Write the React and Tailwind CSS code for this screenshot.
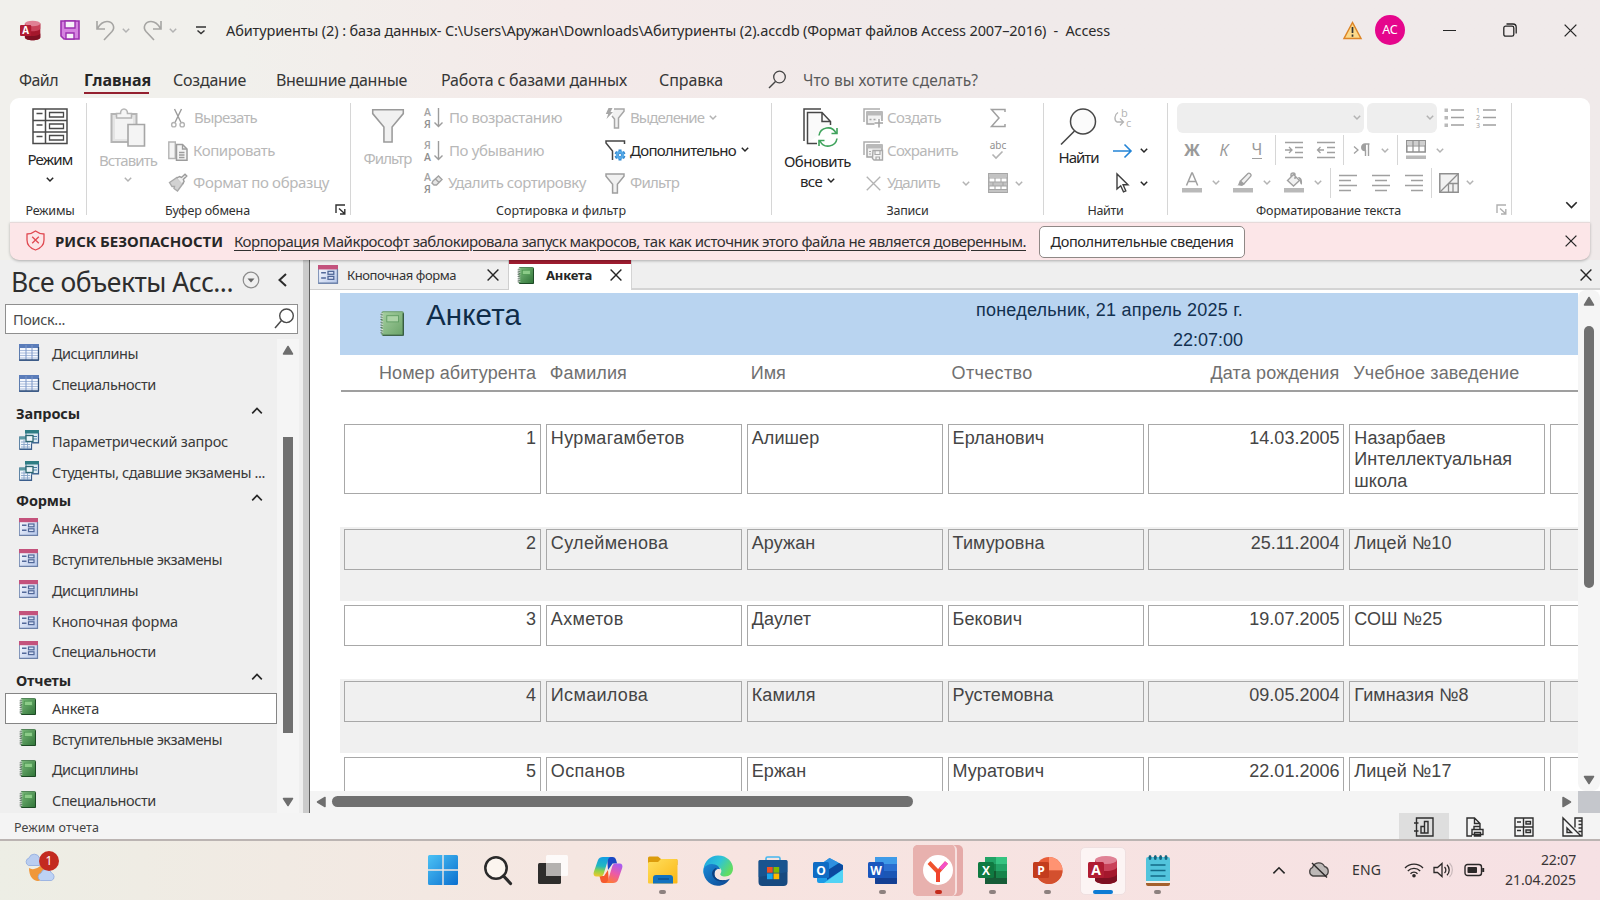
import { useLayoutEffect, useRef } from "react";

/* Text whose letter spacing is computed so that it fills the given width */
function Fit({ w, className = "", children }) {
  const ref = useRef(null);
  useLayoutEffect(() => {
    const el = ref.current;
    el.style.letterSpacing = "0px";
    const natural = el.getBoundingClientRect().width;
    el.style.letterSpacing = `${(w - natural) / el.textContent.length}px`;
  }, [w]);
  return (
    <span ref={ref} className={`inline-block shrink-0 whitespace-nowrap ${className}`}>
      {children}
    </span>
  );
}

function Svg({ w, h, vb, className = "", children }) {
  return (
    <svg width={w} height={h} viewBox={vb || `0 0 ${w} ${h}`} fill="none" className={`block shrink-0 overflow-visible ${className}`}>
      {children}
    </svg>
  );
}

const OFF = "#b3b3b3";
const OFFT = "text-[#b8b8b8]";

function Chev({ c = "#262626", w = 8, s = 1.5, className = "" }) {
  return (
    <Svg w={w} h={w * 0.625} vb="0 0 8 5" className={className}>
      <path d="M.8 .8 4 4 7.2 .8" stroke={c} strokeWidth={s} />
    </Svg>
  );
}

function Cross({ size = 12, c = "#262626", s = 1.4 }) {
  return (
    <Svg w={size} h={size} vb="0 0 12 12">
      <path d="M.6 .6 11.4 11.4M11.4 .6 .6 11.4" stroke={c} strokeWidth={s} />
    </Svg>
  );
}

/* ---------- small application tiles ---------- */
function AccessLogo({ size }) {
  return (
    <Svg w={size} h={size} vb="0 0 30 30">
      <path d="M7 5v20c0 2 5 4 11 4s11-2 11-4V5z" fill="#a4172c" />
      <path d="M7 19v6c0 2 5 4 11 4s11-2 11-4v-6c0 2-5 4-11 4S7 21 7 19z" fill="#7d1022" />
      <path d="M7 5v7c0 2 5 4 11 4s11-2 11-4V5z" fill="#c9425a" />
      <ellipse cx="18" cy="5" rx="11" ry="4" fill="#e08195" />
      <rect x="0" y="7" width="16" height="16" rx="1.5" fill="#b01c33" />
      <text x="8" y="20" textAnchor="middle" fontFamily="Open Sans, sans-serif" fontWeight="700" fontSize="14" fill="#fff">A</text>
    </Svg>
  );
}

function WordLogo() {
  return (
    <Svg w={30} h={30}>
      <rect x="7" y="2" width="22" height="27" rx="1" fill="#2a6fd0" />
      <rect x="7" y="2" width="22" height="7" fill="#3f9be8" />
      <rect x="7" y="16" width="22" height="7" fill="#1b56b5" />
      <path d="M7 23h22v5a1 1 0 0 1-1 1H8a1 1 0 0 1-1-1z" fill="#143f93" />
      <rect x="0" y="7" width="16" height="16" rx="1.5" fill="#1a56bd" />
      <text x="8" y="19.500" textAnchor="middle" fontFamily="Open Sans, sans-serif" fontWeight="700" fontSize="12" fill="#fff">W</text>
    </Svg>
  );
}

function ExcelLogo() {
  return (
    <Svg w={30} h={30}>
      <rect x="7" y="2" width="22" height="27" rx="1" fill="#17834a" />
      <rect x="7" y="2" width="11" height="7" fill="#22a366" />
      <rect x="18" y="2" width="11" height="7" fill="#35c481" />
      <rect x="18" y="9" width="11" height="7" fill="#22a366" />
      <rect x="7" y="16" width="11" height="7" fill="#12592f" />
      <rect x="7" y="23" width="22" height="6" fill="#175c37" />
      <rect x="0" y="7" width="16" height="16" rx="1.5" fill="#0f7a41" />
      <text x="8" y="19.500" textAnchor="middle" fontFamily="Open Sans, sans-serif" fontWeight="700" fontSize="12" fill="#fff">X</text>
    </Svg>
  );
}

function PptLogo() {
  return (
    <Svg w={30} h={30}>
      <circle cx="16" cy="15.500" r="13.500" fill="#e85c38" />
      <path d="M16 2a13.500 13.500 0 0 1 13.500 13.500H16z" fill="#ff9372" />
      <path d="M2.500 15.500h27A13.500 13.500 0 0 1 16 29 13.500 13.500 0 0 1 2.500 15.500z" fill="#d3502e" />
      <rect x="0" y="7" width="16" height="16" rx="1.5" fill="#c33c1d" />
      <text x="8" y="19.500" textAnchor="middle" fontFamily="Open Sans, sans-serif" fontWeight="700" fontSize="12" fill="#fff">P</text>
    </Svg>
  );
}

function OutlookLogo() {
  return (
    <Svg w={30} h={30}>
      <path d="M4 12 16.500 3 30 10v16a2 2 0 0 1-2 2H6a2 2 0 0 1-2-2z" fill="#1c9be6" />
      <path d="M4 12 16.500 3 25 7.500 14 16z" fill="#2f8fe0" />
      <path d="M14 15.500 26 8l4 2.500v4L14 25z" fill="#0b4aa0" />
      <path d="M30 14.500V26a2 2 0 0 1-2 2H11z" fill="#52d3f5" />
      <rect x="0" y="7" width="16" height="16" rx="1.500" fill="#0f6cc4" />
      <text x="8" y="19.500" textAnchor="middle" fontFamily="Open Sans, sans-serif" fontWeight="700" fontSize="12" fill="#fff">O</text>
    </Svg>
  );
}

function FolderLogo() {
  return (
    <Svg w={30} h={30}>
      <defs>
        <linearGradient id="fold" x1="0" y1="0" x2="1" y2="1">
          <stop offset="0" stopColor="#ffdf5e" />
          <stop offset="1" stopColor="#fbb714" />
        </linearGradient>
      </defs>
      <path d="M0 3a1.500 1.500 0 0 1 1.500-1.500H10L13 4h15a1.500 1.500 0 0 1 1.500 1.500V10H0z" fill="#dc9c0c" />
      <path d="M0 8a2 2 0 0 1 2-1h8l3-3h15.500a1 1 0 0 1 1 1v22.500a1 1 0 0 1-1 1H1a1 1 0 0 1-1-1z" fill="url(#fold)" />
      <path d="M5 28.500V23a3 3 0 0 1 3-3h14a3 3 0 0 1 3 3v5.500z" fill="#1272bf" />
      <path d="M10 24h11" stroke="#0b4a86" strokeWidth="1.200" />
    </Svg>
  );
}

function EdgeLogo() {
  return (
    <Svg w={30} h={31} vb="0 0 30 31">
      <defs>
        <linearGradient id="edgeTop" x1="0" y1="0" x2="1" y2=".5">
          <stop offset="0" stopColor="#1c9fe0" />
          <stop offset=".55" stopColor="#2ec3d8" />
          <stop offset="1" stopColor="#62dc62" />
        </linearGradient>
        <linearGradient id="edgeBot" x1="0" y1="0" x2="1" y2="1">
          <stop offset="0" stopColor="#1a8ad8" />
          <stop offset="1" stopColor="#0d4691" />
        </linearGradient>
      </defs>
      <path d="M.5 14C1.500 6 7.500.5 15 .5c9 0 15 6.500 15 13 0 5-3.500 8-8 8-3.500 0-5.500-1.500-4.500-3 2-3 .5-6-3.500-6.500C8 11 3 14.500.8 19 .3 17.500.2 16 .5 14z" fill="url(#edgeTop)" />
      <path d="M.7 13.500C3 9.500 8 8 12 9.500c3.500 1.300 5 3.500 5.300 5.300-1.300-1.600-5.800-.3-5.800 4.200 0 5 6 8 15.500 4.500C24 28.500 19.500 31 14.500 30.800 5 30-.8 22 .7 13.500z" fill="url(#edgeBot)" />
      <path d="M11.500 19c0-2.500 1.500-4.500 3.500-5 1.500 0 2.300.3 2.500 1-.2 1.300-1.500 2.500-1 4 .7 2.500 3.500 3.500 6 3.500 1.800 0 3.200-.3 4.500-.8l.2 1.800c-3 1.800-6 2.300-9 1.500-4-1-6.700-3.500-6.700-6z" fill="#f4e3e0" />
      <path d="M11.500 19c0 5 6 9 15.500 4.500C20 28.500 9.500 27 9 18c.5-3 2.500-5 5-5-1.500 1-2.500 3-2.500 6z" fill="#0b3f80" />
    </Svg>
  );
}

function StoreLogo() {
  return (
    <Svg w={30} h={31}>
      <path d="M8 7V3.500A1.500 1.500 0 0 1 9.500 2h11A1.500 1.500 0 0 1 22 3.500V7" stroke="#46b7ee" strokeWidth="1.600" />
      <path d="M.5 6.500a1.500 1.500 0 0 1 1.500-1.500h26a1.500 1.500 0 0 1 1.500 1.500V27a4 4 0 0 1-4 4h-21a4 4 0 0 1-4-4z" fill="#174a80" />
      <path d="M.5 6.500a1.500 1.500 0 0 1 1.500-1.500h26a1.500 1.500 0 0 1 1.500 1.500V17L.5 22z" fill="#1a5c9a" opacity=".6" />
      <rect x="9" y="12" width="5.700" height="5.700" fill="#f25022" />
      <rect x="15.500" y="12" width="5.700" height="5.700" fill="#7fba00" />
      <rect x="9" y="18.500" width="5.700" height="5.700" fill="#19a7ee" />
      <rect x="15.500" y="18.500" width="5.700" height="5.700" fill="#ffb900" />
    </Svg>
  );
}

function CopilotLogo() {
  return (
    <Svg w={30} h={28}>
      <defs>
        <linearGradient id="cpA" x1=".3" y1="0" x2=".2" y2="1">
          <stop offset="0" stopColor="#149fe2" />
          <stop offset=".45" stopColor="#22b8c0" />
          <stop offset=".7" stopColor="#8fd14a" />
          <stop offset="1" stopColor="#f3c72c" />
        </linearGradient>
        <linearGradient id="cpB" x1=".7" y1="0" x2=".3" y2="1">
          <stop offset="0" stopColor="#a95cf0" />
          <stop offset=".5" stopColor="#ec5aa6" />
          <stop offset="1" stopColor="#ff7a35" />
        </linearGradient>
      </defs>
      <path d="M14 1h5.500c2 0 3 1 3.600 3l1 3.500h-4.500L15 14z" fill="#1a48c4" />
      <path d="M16 27h-5.500c-2 0-2.500-1-3-3L6.500 20H11l4-6z" fill="#f5592e" />
      <path d="M10 1h8c-1.700 0-2.600 1.500-3.200 3.500l-4 13c-.6 2-1.600 3-3.300 3H3.500C1 20.500 0 18.500.8 16L5 4C5.800 2 7.500 1 10 1z" fill="url(#cpA)" />
      <path d="M20 27h-8c1.700 0 2.600-1.500 3.200-3.500l4-13c.6-2 1.600-3 3.300-3h4c2.500 0 3.500 2 2.700 4.500L25 24c-.8 2-2.500 3-5 3z" fill="url(#cpB)" />
    </Svg>
  );
}

function NotepadLogo() {
  return (
    <Svg w={24} h={31}>
      <path d="M0 4a2 2 0 0 1 2-2h20a2 2 0 0 1 2 2v22H0z" fill="#52c4dc" />
      <path d="M0 26h24v2H0z" fill="#f3efe9" />
      <path d="M0 28h24v1a2 2 0 0 1-2 2H2a2 2 0 0 1-2-2z" fill="#a5602c" />
      <g fill="#15647e">
        <ellipse cx="4" cy="2.600" rx="1.500" ry="2.500" />
        <ellipse cx="9.300" cy="2.600" rx="1.500" ry="2.500" />
        <ellipse cx="14.600" cy="2.600" rx="1.500" ry="2.500" />
        <ellipse cx="20" cy="2.600" rx="1.500" ry="2.500" />
      </g>
      <path d="M4.500 10h15M4.500 15.500h15M4.500 21h15" stroke="#136a86" strokeWidth="1.500" />
    </Svg>
  );
}

/* ---------- ribbon icons ---------- */
const ViewIcon = () => (
  <Svg w={36} h={37}>
    <g stroke="#4a4a4a" strokeWidth="1.500">
      <path d="M1 1h34v34.500H1zM1 12.500h34M1 24h34M13.500 1v34.500" />
      <path d="M17.500 4.500h14v4.500h-14zM17.500 16h14v4.500h-14zM17.500 27.500h14V32h-14zM4.500 5.500h6M4.500 17h6M4.500 28.500h6" strokeWidth="1.300" />
    </g>
  </Svg>
);
const PasteIcon = () => (
  <Svg w={36} h={40}>
    <path d="M1.500 6h25v28h-25z" fill="#e4e4e4" stroke="#b5b5b5" strokeWidth="2" />
    <path d="M5 9h18v22H5z" fill="#f3f3f3" />
    <path d="M6.500 10V5.500h4c0-2.500 1.500-4.500 3.500-4.500s3.500 2 3.500 4.500h4V10z" fill="#f6f6f6" stroke="#b5b5b5" strokeWidth="1.600" />
    <path d="M18 16.500h16.500v21.500H18z" fill="#f4f4f4" stroke="#a6a6a6" strokeWidth="1.600" />
  </Svg>
);
const CutIcon = () => (
  <Svg w={20} h={20}>
    <g stroke={OFF} strokeWidth="1.400">
      <path d="M6.500 1 13 14.500M13.500 1 7 14.500" stroke="#9c9c9c" />
      <circle cx="5.800" cy="16.700" r="2.200" />
      <circle cx="14.200" cy="16.700" r="2.200" />
    </g>
  </Svg>
);
const CopyIcon = () => (
  <Svg w={20} h={20}>
    <path d="M.8 1h6.500v16.500H.8z" fill="#f4f4f4" stroke={OFF} strokeWidth="1.400" />
    <path d="M8.500 3.500h6l4.500 4.500v11.200H8.500z" fill="#f4f4f4" stroke="#9c9c9c" strokeWidth="1.500" />
    <path d="M14.500 3.500V8H19M11 11.500h5.500M11 14h5.500M11 16.500h5.500" stroke="#9c9c9c" strokeWidth="1.300" />
  </Svg>
);
const BrushIcon = () => (
  <Svg w={20} h={20}>
    <path d="M1.500 9.500 9 4.500l6 6L9.500 18 6 15.500l.5-2L4 13.500z" fill="#d2d2d2" stroke="#a9a9a9" strokeWidth="1.400" />
    <path d="m9 5 2.500-1.500 2 1L17 1.200l1.800 1.800-3.500 3.500.8 2L14.500 11" fill="#efefef" stroke="#9c9c9c" strokeWidth="1.400" />
  </Svg>
);
const Funnel = ({ w = 20, c = "#9f9f9f", fill = "#f1f1f1", s = 1.5 }) => (
  <Svg w={w} h={w * 1.05} vb="0 0 20 21">
    <path d="M1 1h18v2.300l-6.600 7.900V20H7.600v-8.800L1 3.300z" fill={fill} stroke={c} strokeWidth={s} />
  </Svg>
);
function SortIcon({ a, b, erase }) {
  return (
    <Svg w={21} h={22}>
      <g fontFamily="Open Sans, sans-serif" fontWeight="600" fontSize="10.500" textAnchor="middle">
        <text x="4.500" y="9" fill="#a3a3a3">{a}</text>
        <text x="4.500" y="20.500" fill="#8e8e8e">{b}</text>
      </g>
      {erase ? (
        <path d="m10 9 5.500-5 3.500 3.500-5.500 5.500h-2.500L9 11zM12.500 7l3.500 3.500" stroke="#a3a3a3" strokeWidth="1.400" fill="#e6e6e6" />
      ) : (
        <path d="M15.500 1v18.500M11.500 15.500l4 4 4-4" stroke="#9c9c9c" strokeWidth="1.400" />
      )}
    </Svg>
  );
}
const SelFilterIcon = () => (
  <Svg w={20} h={21}>
    <path d="M9 1h10v2.300l-5.500 6.700V20h-4v-9L7 8" fill="#f1f1f1" stroke="#a6a6a6" strokeWidth="1.500" />
    <path d="M3.500 0h4L5.500 4H8l-6.500 7 1.700-5H.8z" fill="#a6a6a6" />
  </Svg>
);
const AdvFilterIcon = () => (
  <Svg w={21} h={21}>
    <path d="M19.500 4V1H1v2l6.500 8v9" stroke="#454545" strokeWidth="1.500" />
    <g stroke="#2f86cf" strokeWidth="3">
      <path d="M15 9.500v11M10.300 12.200l9.400 5.600M19.700 12.200l-9.400 5.600" />
    </g>
    <circle cx="15" cy="15" r="4.200" fill="#55a9e6" />
    <circle cx="15" cy="15" r="1.600" fill="#fff" stroke="#2f86cf" strokeWidth=".8" />
  </Svg>
);
const RefreshIcon = () => (
  <Svg w={36} h={39}>
    <path d="M1 33V1h17" stroke="#474747" strokeWidth="1.500" />
    <path d="M4.500 35V4.500H19l8.500 9v5" fill="#fafafa" />
    <path d="M14 35.500H4.500v-31H19l8.500 9V17M19 4.500v9h8.500" stroke="#474747" strokeWidth="1.500" />
    <circle cx="25" cy="29" r="10" fill="#fff" />
    <g stroke="#3fa35c" strokeWidth="1.600">
      <path d="M16 27.500a9 9 0 0 1 17-2.500M34 20v5.500h-5.500M34 30.500a9 9 0 0 1-17 2.500M16 38v-5.500h5.500" />
    </g>
  </Svg>
);
const NewIcon = ({ save }) => (
  <Svg w={21} h={20}>
    <path d="M1 14V1h16" stroke="#adadad" strokeWidth="1.500" />
    <path d="M4 4h15v12H4z" fill="#f1f1f1" stroke="#a3a3a3" strokeWidth="1.500" />
    <path d="M4 4h15v3.500H4z" fill="#b9b9b9" />
    {save ? (
      <g>
        <path d="M10 9.500h9.500V19H11l-1.500-1.500z" fill="#f6f6f6" stroke="#a9a9a9" strokeWidth="1.400" />
        <path d="M12 10v3.500h5V10M13 19v-3h3.500v3" stroke="#a9a9a9" strokeWidth="1.200" />
        <path d="M6 10.500h2M6 13h2" stroke="#a9a9a9" />
      </g>
    ) : (
      <g>
        <path d="M11.500 15h9M16 11v9" stroke="#fff" strokeWidth="4" />
        <path d="M6.500 11.500h2M10.500 11.500h2M11.500 15h8.500M16 11v8.500" stroke="#a3a3a3" strokeWidth="1.500" />
      </g>
    )}
  </Svg>
);
const SigmaIcon = () => (
  <Svg w={16} h={20}>
    <path d="M15 4V1.500H1.500L9 10l-7.500 8.500H15V16" stroke="#a0a0a0" strokeWidth="1.500" />
  </Svg>
);
const SpellIcon = () => (
  <Svg w={20} h={22}>
    <text x="10" y="8.500" textAnchor="middle" fontFamily="Noto Sans, sans-serif" fontSize="10" fill="#8f8f8f">abc</text>
    <path d="m4.500 14.500 3.500 3.500 6.500-6.500" stroke={OFF} strokeWidth="1.600" />
  </Svg>
);
const MoreIcon = () => (
  <Svg w={20} h={20}>
    <path d="M.8.8h18.400v18.400H.8z" fill="#fff" stroke="#a6a6a6" strokeWidth="1.500" />
    <path d="M1 1h18v3.500H1zM1 9h18v4H1zM1 16.500h18V19H1z" fill="#c3c3c3" />
    <path d="M.8 5h18.400M.8 9h18.400M.8 13h18.400M.8 16.500h18.400M7 5v4M13 5v4M5 9v4M15 9v4M7 13v4M13 13v4" stroke="#a6a6a6" strokeWidth="1.100" />
  </Svg>
);
const FindIcon = () => (
  <Svg w={37} h={38}>
    <circle cx="23" cy="13.500" r="12.500" stroke="#474747" strokeWidth="1.500" fill="#fbfbfb" />
    <path d="M14.500 23 1 36.500" stroke="#474747" strokeWidth="1.600" />
  </Svg>
);
const ReplaceIcon = () => (
  <Svg w={20} h={22}>
    <g fontFamily="Open Sans, sans-serif" fontSize="11" fill={OFF}>
      <text x="8" y="10">b</text>
      <text x="13" y="20">c</text>
    </g>
    <path d="M5 5.500C1.500 7.500.8 13 4 15h6M7 11.500l3.500 3.500L7 18.500" stroke={OFF} strokeWidth="1.300" />
  </Svg>
);
const GotoIcon = () => (
  <Svg w={20} h={16}>
    <path d="M0 8h18M11.500 1.500 18 8l-6.500 6.500" stroke="#2384d6" strokeWidth="1.600" />
  </Svg>
);
const CursorIcon = () => (
  <Svg w={16} h={20}>
    <path d="M2 1v15l3.700-3.200 2.800 6 2.300-1-2.700-6H13z" fill="#fdfdfd" stroke="#3d3d3d" strokeWidth="1.400" />
  </Svg>
);

const G = "#a0a0a0";
function ListIcon({ numbered }) {
  return (
    <Svg w={20} h={21}>
      <path d="M7 3h13M7 10.500h13M7 18h13" stroke={G} strokeWidth="1.400" />
      {numbered ? (
        <g fontFamily="Noto Sans, sans-serif" fontSize="7" fill={G}>
          <text x="0" y="5.500">1</text>
          <text x="0" y="13">2</text>
          <text x="0" y="20.500">3</text>
        </g>
      ) : (
        <path d="M.5 1.500h3.500V5H.5zM.5 9h3.500v3.500H.5zM.5 16.500h3.500V20H.5z" fill="#b9b9b9" />
      )}
    </Svg>
  );
}
function IndentIcon({ out }) {
  return (
    <Svg w={20} h={18}>
      <path d="M1 1.500h18M11 6.500h8M11 11.500h8M1 16.500h18" stroke={G} strokeWidth="1.400" />
      {out ? <path d="M1.500 9H8M4.500 6 1.500 9l3 3" stroke={G} strokeWidth="1.300" /> : <path d="M1 9h7M5 6l3 3-3 3" stroke={G} strokeWidth="1.300" />}
    </Svg>
  );
}
function AlignIcon({ d }) {
  return (
    <Svg w={18} h={18}>
      <path d={d} stroke={G} strokeWidth="1.400" />
    </Svg>
  );
}
const ParaIcon = () => (
  <Svg w={18} h={14}>
    <path d="m0 3.500 4 3.500-4 3.500" stroke={G} strokeWidth="1.300" />
    <path d="M15.500 1H11a3.200 3.200 0 0 0 0 6.500h.5V13M14.500 1v12" stroke={G} strokeWidth="1.400" />
    <path d="M12 1h-1a3.200 3.200 0 0 0 0 6.500h1z" fill={G} />
  </Svg>
);
const GridColorIcon = () => (
  <Svg w={20} h={20}>
    <path d="M.8.8h18.400V12H.8z" fill="#fff" stroke="#8f8f8f" strokeWidth="1.500" />
    <path d="M1 1h18v4.500H1z" fill="#cfcfcf" />
    <path d="M1 6h18M7 1v11M13 1v11" stroke="#8f8f8f" strokeWidth="1.200" />
    <path d="M0 15.500h20V19H0z" fill="#b9b9b9" />
  </Svg>
);
const FontColorIcon = () => (
  <Svg w={20} h={21}>
    <path d="M4.500 13.500 9.800 1h.6l5.300 12.500M6.500 9.500h7.200" stroke={G} strokeWidth="1.500" />
    <path d="M0 16h20v4.500H0z" fill="#b9b9b9" />
  </Svg>
);
const PenIcon = () => (
  <Svg w={20} h={21}>
    <path d="M8 8.500 15 1.500c1.200-1.200 4 1.200 2.800 2.600l-6.500 7.400-2 .8-1.800-1.800z" stroke={G} strokeWidth="1.400" fill="#f1f1f1" />
    <path d="m7 8-2 5H3.500l5.500 1 3-2z" fill={G} />
    <path d="M0 16h20v4.500H0z" fill="#b9b9b9" />
  </Svg>
);
const FillIcon = () => (
  <Svg w={20} h={21}>
    <path d="m3.500 8.500 6-6 6 6-6 5.500zM7 5V2.500c0-2 4-2 4 0V7" stroke={G} strokeWidth="1.400" fill="#f1f1f1" />
    <path d="M14 5c3 0 4.500 2 4 7.500-2 0-2-2-2-4z" fill={G} />
    <path d="M0 16h20v4.500H0z" fill="#b9b9b9" />
  </Svg>
);
const AltIcon = () => (
  <Svg w={20} h={20}>
    <path d="M.8.8h18.400v18.400H.8z" fill="#f1f1f1" stroke="#8f8f8f" strokeWidth="1.500" />
    <path d="M1 19 19 1M9.500 10.500H19M9.500 10.500V19M14 10.500V19" stroke="#8f8f8f" strokeWidth="1.300" />
  </Svg>
);
const Launcher = ({ c }) => (
  <Svg w={11} h={11}>
    <path d="M1 9V1h9M4 4.500l5.500 5M9.800 5v5H5" stroke={c} strokeWidth="1.400" />
  </Svg>
);

/* ---------- ribbon structure ---------- */
const Group = ({ className, label, labelW, labelPad = "", launcher, children }) => (
  <div className={`relative flex h-[112px] shrink-0 flex-col border-r border-[#d6d6d6] ${className}`}>
    <div className="flex h-[98.500px] w-full shrink-0">{children}</div>
    <div className={`flex h-[18px] shrink-0 items-center justify-center ${labelPad}`}>
      <Fit w={labelW} className="text-[12.5px] leading-[18px] text-[#303030]">{label}</Fit>
    </div>
    {launcher && <div className="absolute right-[4px] bottom-0">{launcher}</div>}
  </div>
);

const Col = ({ className = "", children }) => <div className={`-mt-px flex shrink-0 flex-col ${className}`}>{children}</div>;

const Item = ({ icon, text, w, on, children, gap = "gap-[6px]" }) => (
  <div className={`flex h-[32.5px] items-center ${gap}`}>
    <div className="flex w-[20px] shrink-0 justify-center">{icon}</div>
    {text && <Fit w={w} className={`mb-[2px] text-[15px] leading-5 ${on ? "text-[#262626]" : OFFT}`}>{text}</Fit>}
    {children}
  </div>
);

const Cell = ({ className, children }) => <div className={`flex shrink-0 items-center ${className}`}>{children}</div>;
const Rule = ({ className }) => <div className={`h-[30px] w-px shrink-0 bg-[#d6d6d6] ${className}`} />;

function Ribbon() {
  return (
    <div className="flex h-[124px] rounded-t-[9px] bg-white pt-[5px]">
      <Group className="w-[77px]" label="Режимы" labelW={49} labelPad="pl-[4px]">
        <div className="flex w-full flex-col items-center pt-[5px] pl-[4px]">
          <ViewIcon />
          <Fit w={45} className="mt-[4px] text-[15px] leading-5 text-[#262626]">Режим</Fit>
          <Chev className="mt-[8px]" />
        </div>
      </Group>

      <Group className="w-[264px]" label="Буфер обмена" labelW={85} labelPad="pr-[22px]" launcher={<Launcher c="#303030" />}>
        <div className="flex w-[82px] shrink-0 flex-col items-center pt-[5px]">
          <PasteIcon />
          <Fit w={58} className={`mt-[2px] text-[15px] leading-5 ${OFFT}`}>Вставить</Fit>
          <Chev className="mt-[7px]" c={OFF} />
        </div>
        <Col className="-ml-px">
          <Item icon={<CutIcon />} text="Вырезать" w={63} gap="gap-[6px]" />
          <Item icon={<CopyIcon />} text="Копировать" w={82} gap="gap-[5px]" />
          <Item icon={<BrushIcon />} text="Формат по образцу" w={136} gap="gap-[5px]" />
        </Col>
      </Group>

      <Group className="w-[421px]" label="Сортировка и фильтр" labelW={130} launcher={null}>
        <div className="flex w-[72px] flex-col items-center pt-[5px] pl-px">
          <Funnel w={34} s={0.9} c="#9a9a9a" />
          <Fit w={48} className={`mt-[4px] text-[15px] leading-5 ${OFFT}`}>Фильтр</Fit>
        </div>
        <Col className="w-[182px]">
          <Item icon={<SortIcon a="А" b="Я" />} text="По возрастанию" w={113} gap="gap-[6px]" />
          <Item icon={<SortIcon a="Я" b="А" />} text="По убыванию" w={95} gap="gap-[6px]" />
          <Item icon={<SortIcon a="А" b="Я" erase />} text="Удалить сортировку" w={138} gap="gap-[5px]" />
        </Col>
        <Col>
          <Item icon={<SelFilterIcon />} text="Выделение" w={74} gap="gap-[5px]"><Chev c={OFF} className="mb-[2px]" /></Item>
          <Item icon={<AdvFilterIcon />} text="Дополнительно" w={106} on gap="gap-[5px]"><Chev className="mb-[2px]" /></Item>
          <Item icon={<Funnel />} text="Фильтр" w={49} gap="gap-[5px]" />
        </Col>
      </Group>

      <Group className="w-[272px]" label="Записи" labelW={42}>
        <div className="flex w-[91px] flex-col items-center pt-[5px]">
          <div className="ml-[6px]"><RefreshIcon /></div>
          <Fit w={67} className="mt-[4px] text-[15px] leading-5 text-[#262626]">Обновить</Fit>
          <div className="flex items-center gap-[5px]">
            <Fit w={22} className="text-[15px] leading-5 text-[#262626]">все</Fit>
            <Chev className="mb-[2px]" />
          </div>
        </div>
        <Col className="w-[125px]">
          <Item icon={<NewIcon />} text="Создать" w={54} gap="gap-[4px]" />
          <Item icon={<NewIcon save />} text="Сохранить" w={71} gap="gap-[4px]" />
          <Item icon={<Cross size={15} c={OFF} s={1.1} />} text="Удалить" w={53} gap="gap-[4px]">
            <Chev c={OFF} className="ml-[18px]" />
          </Item>
        </Col>
        <Col>
          <Item icon={<SigmaIcon />} />
          <Item icon={<SpellIcon />} />
          <Item icon={<MoreIcon />}><Chev c={OFF} className="ml-px" /></Item>
        </Col>
      </Group>

      <Group className="w-[124px]" label="Найти" labelW={36}>
        <div className="flex w-[69px] flex-col items-center pt-[5px]">
          <FindIcon />
          <Fit w={40} className="mt-px text-[15px] leading-5 text-[#262626]">Найти</Fit>
        </div>
        <Col>
          <Item icon={<ReplaceIcon />} />
          <Item icon={<GotoIcon />}><Chev className="ml-px" /></Item>
          <Item icon={<CursorIcon />}><Chev className="ml-px" /></Item>
        </Col>
      </Group>

      <Group className="w-[344px]" label="Форматирование текста" labelW={145} labelPad="pr-[22px]" launcher={<Launcher c="#b0b0b0" />}>
        <Col className="pl-[9px]">
          <div className="flex h-[31px] items-center">
            <div className="flex h-[30px] w-[187px] items-center justify-end rounded-[6px] bg-[#eeeeee] pr-[3px]"><Chev c={OFF} /></div>
            <div className="ml-[3px] flex h-[30px] w-[70px] items-center justify-end rounded-[6px] bg-[#eeeeee] pr-[3px]"><Chev c={OFF} /></div>
            <div className="ml-[7px]"><ListIcon /></div>
            <div className="ml-[12px]"><ListIcon numbered /></div>
          </div>
          <div className="flex h-[34px] items-center text-[16px] leading-none text-[#9a9a9a]">
            <Cell className="w-[30px] justify-center font-bold">Ж</Cell>
            <Cell className="w-[34px] justify-center italic">К</Cell>
            <Cell className="w-[32px] justify-center"><span className="border-b border-[#a0a0a0] pb-px">Ч</span></Cell>
            <Rule className="ml-[2px]" />
            <Cell className="ml-[8px] w-[32px]"><IndentIcon /></Cell>
            <Cell className="w-[27px]"><IndentIcon out /></Cell>
            <Rule />
            <Cell className="ml-[10px] w-[27px]"><ParaIcon /></Cell>
            <Cell className="w-[16px]"><Chev c={OFF} /></Cell>
            <Rule />
            <Cell className="ml-[8px] w-[30px]"><GridColorIcon /></Cell>
            <Chev c={OFF} />
          </div>
          <div className="flex h-[31px] items-center pl-[5px]">
            <Cell className="w-[30px]"><FontColorIcon /></Cell>
            <Cell className="w-[21px]"><Chev c={OFF} /></Cell>
            <Cell className="w-[30px]"><PenIcon /></Cell>
            <Cell className="w-[21px]"><Chev c={OFF} /></Cell>
            <Cell className="w-[30px]"><FillIcon /></Cell>
            <Cell className="w-[16px]"><Chev c={OFF} /></Cell>
            <Rule />
            <Cell className="ml-[8px] w-[33px]"><AlignIcon d="M0 1.500h18M0 6.500h12M0 11.500h18M0 16.500h12" /></Cell>
            <Cell className="w-[33px]"><AlignIcon d="M0 1.500h18M3 6.500h12M0 11.500h18M3 16.500h12" /></Cell>
            <Cell className="w-[26px]"><AlignIcon d="M0 1.500h18M6 6.500h12M0 11.500h18M6 16.500h12" /></Cell>
            <Rule />
            <Cell className="ml-[7px] w-[27px]"><AltIcon /></Cell>
            <Chev c={OFF} />
          </div>
        </Col>
      </Group>
      <div className="flex flex-1 items-end justify-end pr-[12px] pb-[13px]"><Chev w={13} s={1} /></div>
    </div>
  );
}

function TitleBar() {
  return (
    <div className="flex h-[60px] items-center pl-[20px]">
      <AccessLogo size={21} />
      <Svg w={20} h={20} className="ml-[19px]">
        <path d="M1 1h18v18H4l-3-3z" fill="#d583e0" stroke="#9b2fae" strokeWidth="1.600" />
        <path d="M5 1v7h10V1z" fill="#f6f0f8" stroke="#9b2fae" strokeWidth="1.400" />
        <path d="M6 19v-6h8v6z" fill="#f6f0f8" stroke="#9b2fae" strokeWidth="1.400" />
      </Svg>
      <Svg w={19} h={21} className="ml-[16px]">
        <path d="M1 1v8h8M1.500 8.500C4 4 7 1.500 11 1.500c6 0 8.500 6 5 10L8 20" stroke="#a6a5a3" strokeWidth="1.600" />
      </Svg>
      <Chev c={OFF} className="ml-[7px]" />
      <Svg w={19} h={21} className="ml-[13px]">
        <path d="M18 1v8h-8M17.500 8.500C15 4 12 1.500 8 1.500c-6 0-8.500 6-5 10L11 20" stroke="#a6a5a3" strokeWidth="1.600" />
      </Svg>
      <Chev c={OFF} className="ml-[7px]" />
      <Svg w={10} h={9} className="ml-[19px]">
        <path d="M0 1h10M1.500 4.500 5 7.500l3.500-3" stroke="#333" strokeWidth="1.500" />
      </Svg>
      <Fit w={884} className="ml-[20px] text-[14.500px] leading-5 text-[#2b2b2b]">
        {"Абитуриенты (2) : база данных- C:\\Users\\Аружан\\Downloads\\Абитуриенты (2).accdb (Формат файлов Access 2007–2016)\u00a0 -\u00a0 Access"}
      </Fit>
      <div className="flex-1" />
      <Svg w={19} h={19}>
        <path d="M9.500 1.500 18 17.500H1z" fill="#fbd98a" stroke="#dd8527" strokeWidth="1.500" />
        <path d="M9.500 6v6M9.500 13.500v2.200" stroke="#333" strokeWidth="1.700" />
      </Svg>
      <div className="ml-[13px] flex size-[30px] items-center justify-center rounded-full bg-[#e5068c] text-[12.500px] text-white">АС</div>
      <div className="ml-[38px] h-px w-[13px] bg-[#262626]" />
      <Svg w={14} h={14} className="ml-[47px]">
        <rect x=".8" y="3.200" width="10" height="10" rx="1.800" stroke="#262626" strokeWidth="1.300" />
        <path d="M3.500 1h6.500a3.200 3.200 0 0 1 3.200 3.200V10.500" stroke="#262626" strokeWidth="1.300" />
      </Svg>
      <div className="mr-[23px] ml-[47px]"><Cross size={13} s={1.200} /></div>
    </div>
  );
}

function MenuBar() {
  const t = "text-[16px] leading-6 text-[#363636]";
  return (
    <div className="flex h-[38px] items-start pt-[8px] pl-[19px]">
      <Fit w={39} className={t}>Файл</Fit>
      <div className="ml-[26px] flex h-[26px] w-[65px] flex-col border-b-[2px] border-[#94202f]">
        <Fit w={65} className="text-[16px] leading-6 font-bold text-[#262626]">Главная</Fit>
      </div>
      <Fit w={73} className={`ml-[24px] ${t}`}>Создание</Fit>
      <Fit w={131} className={`ml-[30px] ${t}`}>Внешние данные</Fit>
      <Fit w={186} className={`ml-[34px] ${t}`}>Работа с базами данных</Fit>
      <Fit w={64} className={`ml-[32px] ${t}`}>Справка</Fit>
      <Svg w={19} h={19} className="mt-[2px] ml-[45px]">
        <circle cx="11.500" cy="7" r="5.800" stroke="#444" strokeWidth="1.300" />
        <path d="M7.500 11.500 1 18" stroke="#444" strokeWidth="1.400" />
      </Svg>
      <Fit w={175} className="ml-[16px] text-[15.500px] leading-6 text-[#5a5a5a]">Что вы хотите сделать?</Fit>
    </div>
  );
}

function SecurityBar() {
  return (
    <div className="flex h-[38px] items-center rounded-b-[9px] border-t border-[#e6dada] bg-[#fce6e8] pl-[16px] shadow-[0_1px_3px_rgba(0,0,0,0.28)]">
      <Svg w={19} h={21} className="mb-[2px]">
        <path d="M9.500 1C12 3 14.500 3.800 18 4v6c0 5-3.500 8.300-8.500 10C4.500 18.300 1 15 1 10V4c3.500-.2 6-1 8.500-3z" stroke="#e04a52" strokeWidth="1.300" />
        <path d="m6.200 6.700 6.600 6.600m0-6.600-6.600 6.600" stroke="#e04a52" strokeWidth="1.300" />
      </Svg>
      <Fit w={168} className="mb-[2px] ml-[10px] text-[15px] leading-5 font-bold text-[#262626]">РИСК БЕЗОПАСНОСТИ</Fit>
      <Fit w={792} className="mb-[2px] ml-[11px] text-[15px] leading-5 text-[#303030] underline underline-offset-[3px]">
        Корпорация Майкрософт заблокировала запуск макросов, так как источник этого файла не является доверенным.
      </Fit>
      <div className="ml-[13px] flex h-[32px] w-[206px] items-center justify-center rounded-[5px] border border-[#8f8886] bg-white">
        <Fit w={183} className="mb-[2px] text-[14.500px] leading-5 text-[#262626]">Дополнительные сведения</Fit>
      </div>
      <div className="flex-1" />
      <div className="mr-[13px] mb-[2px]"><Cross size={12} s={1.300} /></div>
    </div>
  );
}

/* ---------- navigation pane ---------- */
const TableIcon = () => (
  <Svg w={20} h={17}>
    <rect x=".5" y=".5" width="19" height="16" fill="#f4f7fd" stroke="#5d7cae" />
    <rect x="0" y="0" width="20" height="4" fill="#5b7dba" />
    <path d="M1 6.500h18M1 9h18M1 11.500h18M1 14h18" stroke="#a3b5d8" strokeWidth=".9" />
    <path d="M7 1v15.500M13 1v15.500" stroke="#7d97c8" strokeWidth="1" />
    <path d="M.5 16h19M19.500 3v13" stroke="#33517c" strokeWidth="1.300" />
  </Svg>
);
const QueryIcon = () => (
  <Svg w={20} h={20}>
    <rect x="7" y=".5" width="12.500" height="12" fill="#dcebf2" stroke="#4a7c9c" />
    <rect x="6" y="0" width="14" height="3.500" fill="#2f7d84" />
    <path d="M14 6.500h4M14 9h4" stroke="#4a7fa5" />
    <rect x=".5" y="7" width="12" height="12" fill="#f0f5fb" stroke="#5f84a6" />
    <rect x=".5" y="6.500" width="10" height="3" fill="#5c9aa4" />
    <path d="M2 12h9M2 14.500h9M2 17h9M5 10v9M8.500 10v9" stroke="#86a3c7" strokeWidth=".9" />
    <rect x="7" y="5.500" width="7" height="6" fill="#eef5f8" stroke="#2d6671" strokeWidth="1.300" />
    <path d="M19.500 3v10H13M.5 19.300h12V14" stroke="#3a5d8c" strokeWidth="1.200" />
  </Svg>
);
const FormIcon = ({ w = 19, h = 18 }) => (
  <Svg w={w} h={h} vb="0 0 19 18">
    <defs>
      <linearGradient id="frm" x1="0" y1="0" x2="1" y2="1">
        <stop offset="0" stopColor="#fdfdff" />
        <stop offset="1" stopColor="#b4c6ea" />
      </linearGradient>
    </defs>
    <rect x=".5" y=".5" width="18" height="17" fill="url(#frm)" stroke="#8497bb" />
    <rect x="0" y="0" width="19" height="4.200" fill="#c4527c" />
    <path d="M3 7.300h4.500M3 12.300h4.500" stroke="#53699a" strokeWidth="1.500" />
    <rect x="9.500" y="6" width="5.500" height="2.800" fill="#d9e2f5" stroke="#4f6697" strokeWidth="1.200" />
    <rect x="9.500" y="10.800" width="5.500" height="2.800" fill="#d9e2f5" stroke="#4f6697" strokeWidth="1.200" />
    <path d="M.5 17.300h18V4" stroke="#6b80a8" strokeWidth="1.200" />
  </Svg>
);
const ReportIcon = ({ size = 17, light }) => (
  <Svg w={size} h={size} vb="0 0 17 17">
    <defs>
      <linearGradient id="rep" x1="0" y1="0" x2="1" y2="1">
        <stop offset="0" stopColor="#7cba7c" />
        <stop offset="1" stopColor="#2f7437" />
      </linearGradient>
      <linearGradient id="repl" x1="0" y1="0" x2="1" y2="1">
        <stop offset="0" stopColor="#a5cfa0" />
        <stop offset="1" stopColor="#6aa368" />
      </linearGradient>
    </defs>
    <rect x="2" y=".5" width="14.500" height="16" rx=".8" fill={light ? "url(#repl)" : "url(#rep)"} stroke={light ? "#6b9c6c" : "#3a7241"} strokeWidth=".8" />
    <path d="M2.500 16.500h14V1.500" stroke={light ? "#2c5038" : "#1e4a26"} strokeWidth={light ? ".8" : "1"} />
    <rect x="5.300" y="3.200" width="8" height="4.200" fill={light ? "#acd3a6" : "#8ccb88"} stroke={light ? "#5f9c62" : "#4c9650"} strokeWidth={light ? ".6" : ".7"} />
    <path d="M2 1.500v14.500" stroke="#efefef" strokeWidth={light ? "1.6" : "2.400"} strokeDasharray=".9 .9" />
    <path d="M1.700 1.900v14" stroke={light ? "#5c7a68" : "#4f6355"} strokeWidth={light ? "1.500" : "2.200"} strokeDasharray=".7 1.100" />
  </Svg>
);

const navItems = [
  { k: "t", t: "Дисциплины", w: 86 },
  { k: "t", t: "Специальности", w: 104 },
  { k: "h", t: "Запросы", w: 64 },
  { k: "q", t: "Параметрический запрос", w: 176 },
  { k: "q", t: "Студенты, сдавшие экзамены ...", w: 213 },
  { k: "h", t: "Формы", w: 55 },
  { k: "f", t: "Анкета", w: 47 },
  { k: "f", t: "Вступительные экзамены", w: 170 },
  { k: "f", t: "Дисциплины", w: 86 },
  { k: "f", t: "Кнопочная форма", w: 126 },
  { k: "f", t: "Специальности", w: 104 },
  { k: "h", t: "Отчеты", w: 55 },
  { k: "r", t: "Анкета", w: 47, sel: true },
  { k: "r", t: "Вступительные экзамены", w: 170 },
  { k: "r", t: "Дисциплины", w: 86 },
  { k: "r", t: "Специальности", w: 104 },
];
const navIcon = { t: <TableIcon />, q: <QueryIcon />, f: <FormIcon />, r: <ReportIcon /> };

function Triangle({ d }) {
  return (
    <Svg w={12} h={10}>
      <path d={d} fill="#6e6e6e" stroke="#6e6e6e" strokeWidth="1.500" strokeLinejoin="round" />
    </Svg>
  );
}

function NavPane() {
  return (
    <div className="flex w-[303px] shrink-0 flex-col bg-[#efefef]">
      <div className="flex h-[44px] shrink-0 items-center pl-[11px]">
        <Fit w={222} className="mb-px text-[26.500px] leading-[36px] text-[#2e2e2e]">Все объекты Acc...</Fit>
        <Svg w={18} h={18} className="mb-[4px] ml-[9px]">
          <circle cx="9" cy="9" r="7.800" stroke="#8c8c8c" strokeWidth="1.200" />
          <path d="M5.500 7.500h7L9 11.500z" fill="#666" />
        </Svg>
        <Svg w={9} h={14} className="mb-[5px] ml-[18px]">
          <path d="M8 1 1.500 7 8 13" stroke="#2b2b2b" strokeWidth="2" />
        </Svg>
      </div>
      <div className="mr-[5px] ml-[5px] flex h-[30px] shrink-0 items-center border border-[#8f8f8f] bg-white pl-[7px]">
        <Fit w={52} className="text-[14.500px] leading-5 text-[#4a4a4a]">Поиск...</Fit>
        <div className="flex-1" />
        <Svg w={20} h={21} className="mr-[3px] mb-px">
          <circle cx="12.500" cy="7.800" r="6.800" stroke="#4a4a4a" strokeWidth="1.400" />
          <path d="M7.500 12.500 1 20" stroke="#4a4a4a" strokeWidth="1.500" />
        </Svg>
      </div>
      <div className="flex min-h-0 flex-1 overflow-hidden pt-[5px] pl-[5px]">
        <div className="flex w-[272px] shrink-0 flex-col">
          {navItems.map((n, i) =>
            n.k === "h" ? (
              <div key={i} className="flex h-[25.600px] shrink-0 items-center justify-between pr-[14px] pl-[11px]">
                <Fit w={n.w} className="mb-px text-[14.500px] leading-5 font-bold text-[#262626]">{n.t}</Fit>
                <Chev w={12} s={1.100} className="mb-[6px] rotate-180" />
              </div>
            ) : (
              <div key={i} className={`flex h-[30.800px] shrink-0 items-center border pl-[13px] ${n.sel ? "border-[#858585] bg-white" : "border-transparent"}`}>
                <div className="mb-[3px] flex w-[20px] shrink-0">{navIcon[n.k]}</div>
                <Fit w={n.w} className={`ml-[13px] text-[14.500px] leading-5 text-[#3a3a3a] ${n.k === "t" ? "mb-[2px]" : "mb-px"}`}>{n.t}</Fit>
              </div>
            )
          )}
        </div>
        <div className="flex w-[22px] shrink-0 flex-col items-center bg-[#f5f5f5] pt-[6px] pb-[6px]">
          <Triangle d="M1.500 9 6 1.500 10.500 9z" />
          <div className="mt-[82px] h-[296px] w-[10px] bg-[#707070]" />
          <div className="flex-1" />
          <Triangle d="M1.500 1.500 6 8.500 10.500 1.500z" />
        </div>
      </div>
    </div>
  );
}

/* ---------- report ---------- */
const heads = [
  ["Номер абитурента", 157, true],
  ["Фамилия", 77],
  ["Имя", 35],
  ["Отчество", 81],
  ["Дата рождения", 129, true],
  ["Учебное заведение", 166],
  ["", 0],
];
const rows = [
  ["1", "Нурмагамбетов", "Алишер", "Ерланович", "14.03.2005", "Назарбаев Интеллектуальная школа"],
  ["2", "Сулейменова", "Аружан", "Тимуровна", "25.11.2004", "Лицей №10"],
  ["3", "Ахметов", "Даулет", "Бекович", "19.07.2005", "СОШ №25"],
  ["4", "Исмаилова", "Камиля", "Рустемовна", "09.05.2004", "Гимназия №8"],
  ["5", "Оспанов", "Ержан", "Муратович", "22.01.2006", "Лицей №17"],
];

function Report() {
  return (
    <div className="flex min-w-0 flex-1 flex-col overflow-hidden bg-white pt-[3px] pl-[30px] font-['Liberation_Sans',Arial,sans-serif]">
      <div className="flex h-[62px] shrink-0 bg-[#b9d4f0] text-[#12304f]">
        <div className="mt-[18px] ml-[39px]"><ReportIcon size={25} light /></div>
        <Fit w={95} className="mt-[3px] ml-[22px] text-[29.500px] leading-[38px] text-[#0f2c49]">Анкета</Fit>
        <div className="ml-auto flex w-[480px] flex-col items-end pt-[4px] pr-[335px] text-[18px] leading-[26px]">
          <Fit w={267}>понедельник, 21 апрель 2025 г.</Fit>
          <Fit w={70} className="mt-[4px]">22:07:00</Fit>
        </div>
      </div>
      <div className="ml-px flex h-[37px] shrink-0 items-center gap-[4.860px] border-b-2 border-[#9f9f9f] pl-[3px] text-[18px] leading-6 text-[#707070]">
        {heads.map(([t, w, right], i) => (
          <div key={i} className={`flex w-[196px] shrink-0 pr-[4px] pl-[5px] ${right ? "justify-end" : ""}`}>
            {t && <Fit w={w}>{t}</Fit>}
          </div>
        ))}
      </div>
      {rows.map((r, i) => (
        <div
          key={r[0]}
          className={`flex shrink-0 gap-[4.860px] pl-[4px] ${i === 0 ? "h-[135px] pt-[32px]" : i === 1 ? "h-[74px] pt-[2px]" : "mt-[2px] h-[74px] pt-[2px]"} ${i % 2 ? "bg-[#f0f0f0]" : ""}`}
        >
          {[...r, ""].map((c, j) => (
            <div
              key={j}
              className={`shrink-0 border border-[#a8a8a8] px-[4px] pt-[2.500px] text-[18px] leading-[21.600px] text-[#454545] ${i === 0 ? "h-[70px]" : "h-[41px]"} ${j === 0 ? "w-[197px]" : "w-[196px]"} ${j === 0 || j === 4 ? "text-right" : j === 1 ? "tracking-[0.32px]" : "tracking-[0.1px]"}`}
            >
              {c}
            </div>
          ))}
        </div>
      ))}
    </div>
  );
}

function Documents() {
  return (
    <div className="flex min-w-0 flex-1 flex-col bg-white">
      <div className="flex h-[30px] shrink-0 bg-[#efefef]">
        <div className="flex w-[199px] items-center border-r border-b border-[#cfcfcf] pl-[8px]">
          <FormIcon w={20} h={19} />
          <Fit w={109} className="ml-[9px] text-[13px] leading-5 text-[#333]">Кнопочная форма</Fit>
          <div className="ml-[31px]"><Cross size={12} /></div>
        </div>
        <div className="flex w-[122px] items-center border-t-[4px] border-[#a11d31] bg-white pb-[4px] pl-[8px]">
          <ReportIcon size={17} />
          <Fit w={46} className="mb-px ml-[12px] text-[13px] leading-5 font-bold text-[#262626]">Анкета</Fit>
          <div className="ml-[18px]"><Cross size={12} /></div>
        </div>
        <div className="flex flex-1 items-center justify-end border-b-2 border-l border-[#d4d4d4] pt-[2px] pr-[8px]"><Cross size={12} /></div>
      </div>
      <div className="flex min-h-0 flex-1">
        <Report />
        <div className="flex w-[22px] shrink-0 flex-col items-center rounded-[8px] bg-[#f5f5f5] pt-[6px] pb-[6px]">
          <Triangle d="M1.500 9 6 1.500 10.500 9z" />
          <div className="mt-[20px] h-[262px] w-[10px] rounded-full bg-[#707070]" />
          <div className="flex-1" />
          <Triangle d="M1.500 1.500 6 8.500 10.500 1.500z" />
        </div>
      </div>
      <div className="flex h-[22px] shrink-0 bg-[#f4f4f4]">
        <div className="flex flex-1 items-center pr-[5px] pb-px pl-[5px]">
          <div className="-rotate-90"><Triangle d="M1.500 9 6 1.500 10.500 9z" /></div>
          <div className="ml-[5px] h-[11px] w-[581px] rounded-full bg-[#707070]" />
          <div className="flex-1" />
          <div className="rotate-90"><Triangle d="M1.500 9 6 1.500 10.500 9z" /></div>
        </div>
        <div className="w-[22px] bg-[#c5c7cc]" />
      </div>
    </div>
  );
}

function StatusBar() {
  const s = { stroke: "#2e2e2e", strokeWidth: 1.4 };
  return (
    <div className="flex h-[28px] shrink-0 items-center border-b-2 border-[#bbb4b2] bg-[#f4f4f4] pl-[14px]">
      <Fit w={85} className="mt-[3px] text-[12.500px] leading-5 text-[#444]">Режим отчета</Fit>
      <div className="flex-1" />
      <div className="flex h-full w-[50px] items-center justify-center bg-[#dedede]">
        <Svg w={20} h={20} className="mt-px">
          <path d="M2.500 1h16.500v18H2.500zM0 6h4.500M0 14h4.500M7 9.500h3.500V16H7zM10.500 4.500H14V16h-3.500z" {...s} />
        </Svg>
      </div>
      <div className="flex w-[51px] justify-center">
        <Svg w={20} h={20} className="mt-px">
          <path d="M7 19H2V1h7.500L15 6.500V9M9.500 1v5.500H15M9 9.500h6v3H9zM7 12.500h11v5H7zM9.500 15.500h6V19h-6z" {...s} />
        </Svg>
      </div>
      <div className="flex w-[47px] justify-center">
        <Svg w={20} h={20} className="mt-px">
          <path d="M1 1h18v18H1zM1 10h18M9.500 1v18M12 4.500h4.500v2.500H12zM12 13h4.500v2.500H12zM3 5h4M3 13.500h4" {...s} />
        </Svg>
      </div>
      <div className="mr-[2px] flex w-[51px] justify-center">
        <Svg w={21} h={20} className="mt-px">
          <path d="M1 1v18h18zM5 11v4.500h4.500zM13 10.500V1h7v18h-2M20 4h-3.500M20 7.500h-3.500M20 11h-3.500M20 14.500h-3.500" {...s} />
        </Svg>
      </div>
    </div>
  );
}

/* ---------- taskbar ---------- */
function Slot({ dot = "", children }) {
  return (
    <div className="flex h-[50px] w-[55px] shrink-0 flex-col items-center">
      <div className="flex h-[46px] items-center pt-[4px]">{children}</div>
      {dot && <div className={`-mt-px h-[4px] shrink-0 rounded-full ${dot}`} />}
    </div>
  );
}
const gray = "w-[7px] bg-[#8d817f]";

function Taskbar() {
  return (
    <div className="flex h-[59px] items-start bg-linear-to-r from-[#edeee5] via-[#f7e4e0] via-45% to-[#f6e1e4] pt-[4px]">
      <div className="w-[415px] shrink-0 pl-[24px]">
        <div className="relative h-[40px] w-[36px]">
          <Svg w={36} h={40} className="mt-[2px]">
            <path d="M5 21c4 3 11 0 16-7 5 8 0 19-7 20-5 0-9-5-9-13z" fill="#f0973a" />
            <path d="M4.500 18.500a4 4 0 0 1 .5-7.500 5.500 5.500 0 0 1 10.500 0 4 4 0 0 1 0 7.500z" fill="#b9cdf0" stroke="#8eaade" strokeWidth=".8" />
            <path d="M16.500 33.500a4 4 0 0 1 .5-7.500 5.500 5.500 0 0 1 10.500 0 4 4 0 0 1 0 7.500z" fill="#bdd2f5" stroke="#8eaade" strokeWidth=".8" />
          </Svg>
          <div className="absolute top-[4px] left-[15px] flex size-[20px] items-center justify-center rounded-full bg-[#c32a20] text-[12px] leading-none text-white">1</div>
        </div>
      </div>
      <Slot>
        <Svg w={30} h={30}>
          <defs>
            <linearGradient id="win" x1="0" y1="0" x2="1" y2="1">
              <stop offset="0" stopColor="#4cc2f5" />
              <stop offset="1" stopColor="#0a6fcf" />
            </linearGradient>
          </defs>
          <path d="M1.500 0h12.800v14.300H0V1.500A1.500 1.500 0 0 1 1.500 0zM15.700 0h12.800A1.500 1.500 0 0 1 30 1.500v12.800H15.700zM0 15.700h14.300V30H1.500A1.500 1.500 0 0 1 0 28.500zM15.700 15.700H30v12.800a1.500 1.500 0 0 1-1.500 1.500H15.700z" fill="url(#win)" />
        </Svg>
      </Slot>
      <Slot>
        <Svg w={28} h={29}>
          <circle cx="12" cy="12" r="10.700" stroke="#2a2a2a" strokeWidth="2.500" fill="#fbf5ef" />
          <path d="m19.500 20 7 7.500" stroke="#2a2a2a" strokeWidth="3.200" strokeLinecap="round" />
        </Svg>
      </Slot>
      <Slot>
        <Svg w={30} h={30}>
          <rect x="0" y="8" width="23" height="21" rx="1.500" fill="#2e2d2c" />
          <rect x="8" y="0" width="22" height="21" rx="1.500" fill="#fff" fillOpacity=".8" />
          <path d="M8 8h15v13H8z" fill="#b4b1af" />
        </Svg>
      </Slot>
      <Slot><CopilotLogo /></Slot>
      <Slot dot={gray}><FolderLogo /></Slot>
      <Slot><EdgeLogo /></Slot>
      <Slot><StoreLogo /></Slot>
      <Slot><OutlookLogo /></Slot>
      <Slot dot={gray}><WordLogo /></Slot>
      <div className="flex w-[55px] shrink-0 pl-[3px]">
        <div className="h-[51px] w-[50px] rounded-[5px] bg-[#e5aaa8]">
          <div className="flex h-[51px] w-[44px] flex-col items-center rounded-[5px] border-r-2 border-[#f7e0df] bg-[#e8b1ae]">
            <div className="flex h-[46px] items-center pt-[4px] pl-[8px]">
              <Svg w={30} h={30}>
                <circle cx="15" cy="15" r="15" fill="#fff" />
                <path d="m6 7.500 9 9.500 8.500-9.500" stroke="#f0532d" strokeWidth="4" />
                <path d="m17.500 14 6-6.500" stroke="#f450c8" strokeWidth="4" />
                <path d="M15 15v12" stroke="#f0432d" strokeWidth="4" />
              </Svg>
            </div>
            <div className="-mt-px ml-[8px] h-[4px] w-[7px] rounded-full bg-[#c42b1c]" />
          </div>
        </div>
      </div>
      <Slot dot={gray}><ExcelLogo /></Slot>
      <Slot dot={gray}><PptLogo /></Slot>
      <div className="flex w-[55px] shrink-0 justify-center">
        <div className="mt-[2px] flex h-[48px] w-[46px] flex-col items-center rounded-[5px] border border-[#efdfe0] bg-[#fcf4f4]">
          <div className="flex h-[43px] items-center pt-[2px]"><AccessLogo size={30} /></div>
          <div className="h-[4px] w-[20px] rounded-full bg-[#0d7bd4]" />
        </div>
      </div>
      <Slot dot={gray}><NotepadLogo /></Slot>
      <div className="flex h-[50px] flex-1 items-center">
        <Chev w={14} s={0.900} className="ml-[87px] rotate-180" />
        <Svg w={22} h={18} className="ml-[22px]">
          <path d="M5 15a4.500 4.500 0 0 1-.5-8.500 6.500 6.500 0 0 1 12-1A5 5 0 0 1 17 15z" fill="#bdb8b7" stroke="#474343" strokeWidth="1.300" />
          <path d="m4 2 15 14.500" stroke="#2b2828" strokeWidth="1.400" />
        </Svg>
        <Fit w={29} className="ml-[22px] text-[14px] leading-5 text-[#333]">ENG</Fit>
        <Svg w={20} h={16} className="ml-[23px]">
          <path d="M1 6a12.500 12.500 0 0 1 18 0M3.800 9a8.700 8.700 0 0 1 12.400 0M6.500 11.700a5 5 0 0 1 7 0" stroke="#2b2828" strokeWidth="1.400" />
          <circle cx="10" cy="13.700" r="1.800" fill="#2b2828" />
        </Svg>
        <Svg w={20} h={16} className="ml-[9px]">
          <path d="M1 5.500h3.500L9 1.500v13l-4.500-4H1z" stroke="#2b2828" strokeWidth="1.300" />
          <path d="M11.500 5a4 4 0 0 1 0 6M14 2.700a7.500 7.500 0 0 1 0 10.600" stroke="#2b2828" strokeWidth="1.300" />
          <path d="M16.500 1a10 10 0 0 1 0 14" stroke="#c9b9bb" strokeWidth="1.200" />
        </Svg>
        <Svg w={21} h={14} className="ml-[11px]">
          <rect x="1" y="1.500" width="16.500" height="11" rx="2.500" stroke="#2b2828" strokeWidth="1.400" />
          <rect x="3.500" y="4" width="9.500" height="6" rx=".8" fill="#2b2828" />
          <path d="M19.200 5v4" stroke="#2b2828" strokeWidth="2" />
        </Svg>
        <div className="mr-[24px] ml-auto flex flex-col items-end text-[14px] leading-5 text-[#3a3536]">
          <Fit w={35}>22:07</Fit>
          <Fit w={71}>21.04.2025</Fit>
        </div>
      </div>
    </div>
  );
}

export default function App() {
  return (
    <div className="flex h-[900px] w-[1600px] flex-col overflow-hidden bg-[#efefef] font-['Noto_Sans','Open_Sans',sans-serif]">
      <div className="h-[260px] shrink-0 bg-linear-to-r from-[#f1f0ec] from-15% via-[#f4eae9] via-35% to-[#f0eaea] to-60%">
        <TitleBar />
        <MenuBar />
        <div className="relative z-10 mx-[10px] w-[1580px]">
          <Ribbon />
          <SecurityBar />
        </div>
      </div>
      <div className="flex h-[553px] shrink-0 overflow-hidden">
        <NavPane />
        <div className="w-[7px] shrink-0 border-r border-[#5f5f5f] bg-[#cbcbcb]" />
        <Documents />
      </div>
      <StatusBar />
      <Taskbar />
    </div>
  );
}
